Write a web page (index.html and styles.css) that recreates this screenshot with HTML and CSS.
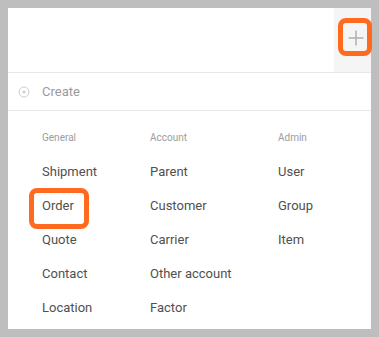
FILE: index.html
```html
<!DOCTYPE html>
<html lang="en">
<head>
<meta charset="UTF-8">
<title>Create menu</title>
<link rel="stylesheet" href="styles.css">
</head>
<body>
<div class="panel">
    <div class="header">
        <div class="add-col">
            <button class="add-button">
                <svg width="16" height="16" viewBox="0 0 16 16"><path d="M8 0.5V15.5M0.5 8H15.5" stroke="#b0b0b0" stroke-width="1.5" fill="none"/></svg>
            </button>
            <div class="mark mark-add"></div>
        </div>
    </div>

    <div class="create-row">
        <svg class="create-icon" width="12" height="12" viewBox="0 0 12 12"><circle cx="6" cy="6" r="5" stroke="#cfcfcf" stroke-width="1" fill="none"/><circle cx="6" cy="6" r="1.5" fill="#cfcfcf"/></svg>
        <span>Create</span>
    </div>

    <div class="menu-grid">
        <div class="col">
            <div class="head">General</div>
            <a href="#">Shipment</a>
            <a href="#" class="marked">Order<span class="mark mark-order"></span></a>
            <a href="#">Quote</a>
            <a href="#">Contact</a>
            <a href="#">Location</a>
        </div>
        <div class="col">
            <div class="head">Account</div>
            <a href="#">Parent</a>
            <a href="#">Customer</a>
            <a href="#">Carrier</a>
            <a href="#">Other account</a>
            <a href="#">Factor</a>
        </div>
        <div class="col">
            <div class="head">Admin</div>
            <a href="#">User</a>
            <a href="#">Group</a>
            <a href="#">Item</a>
        </div>
    </div>
</div>
</body>
</html>
```

FILE: styles.css
```css
body {
    margin: 0;
    padding: 8px;
    background-color: #bebebe;
    font-family: Roboto, "Liberation Sans", sans-serif;
}

.panel {
    width: 363px;
    height: 321px;
    background-color: #ffffff;
}

.header {
    height: 64px;
    display: flex;
    justify-content: flex-end;
    border-bottom: 1px solid #e8e8e8;
}

.add-col {
    position: relative;
    width: 37px;
    background-color: #f5f5f5;
    display: flex;
    align-items: center;
    justify-content: center;
}

.add-button {
    border: none;
    background: none;
    padding: 0;
    width: 24px;
    height: 24px;
    display: flex;
    align-items: center;
    justify-content: center;
    margin-left: 6px;
    margin-top: -4px;
}

/* orange highlight boxes */
.mark {
    position: absolute;
    border: 5px solid #ff6a1f;
    border-radius: 8px;
    box-sizing: border-box;
}

.mark-add {
    left: 4px;
    top: 10px;
    width: 34px;
    height: 38px;
}

.create-row {
    height: 37px;
    display: flex;
    align-items: center;
    border-bottom: 1px solid #e8e8e8;
    padding-left: 10px;
    font-size: 13px;
    color: #979aa0;
}

.create-icon {
    margin-right: 12px;
}

.menu-grid {
    display: flex;
    padding: 10px 0 0 34px;
}

.col {
    display: flex;
    flex-direction: column;
}

.col:nth-child(1) { width: 108px; }
.col:nth-child(2) { width: 128px; }

.head {
    height: 34px;
    line-height: 34px;
    font-size: 10px;
    color: #9c9c9c;
}

.col a {
    height: 34px;
    line-height: 34px;
    font-size: 13px;
    color: #505050;
    text-decoration: none;
}

.marked {
    position: relative;
    align-self: flex-start;
}

.mark-order {
    left: -13px;
    top: -1px;
    width: 60px;
    height: 41px;
}
```
